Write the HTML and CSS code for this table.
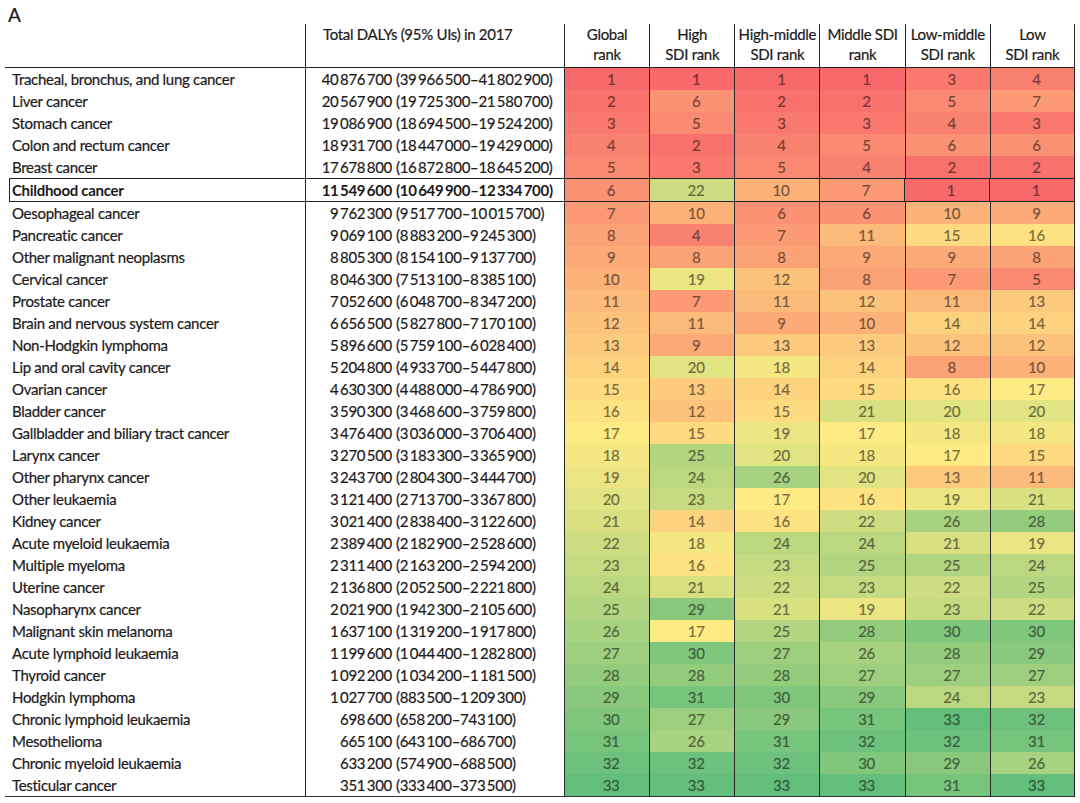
FILE: index.html
```html
<!DOCTYPE html>
<html lang="en">
<head>
<meta charset="utf-8">
<title>Cancer DALYs ranking</title>
<link rel="stylesheet" href="styles.css">
</head>
<body>
<div class="page">
  <div class="panel-label">A</div>
  <div class="table">
    <div class="row head">
      <div class="h-name"></div>
      <div class="h-daly">Total DALYs (95% UIs) in 2017</div>
      <div class="h-rank">Global<br>rank</div>
      <div class="h-rank">High<br>SDI rank</div>
      <div class="h-rank">High-middle<br>SDI rank</div>
      <div class="h-rank">Middle SDI<br>rank</div>
      <div class="h-rank">Low-middle<br>SDI rank</div>
      <div class="h-rank last">Low<br>SDI rank</div>
    </div>
    <div class="tbody">
      <div class="row"><div class="name">Tracheal, bronchus, and lung cancer</div><div class="daly"><span class="est">40&thinsp;876&thinsp;700</span><span class="ui">(39&thinsp;966&thinsp;500–41&thinsp;802&thinsp;900)</span></div><div class="rk r1">1</div><div class="rk r1">1</div><div class="rk r1">1</div><div class="rk r1">1</div><div class="rk r3">3</div><div class="rk last r4">4</div></div>
      <div class="row"><div class="name">Liver cancer</div><div class="daly"><span class="est">20&thinsp;567&thinsp;900</span><span class="ui">(19&thinsp;725&thinsp;300–21&thinsp;580&thinsp;700)</span></div><div class="rk r2">2</div><div class="rk r6">6</div><div class="rk r2">2</div><div class="rk r2">2</div><div class="rk r5">5</div><div class="rk last r7">7</div></div>
      <div class="row"><div class="name">Stomach cancer</div><div class="daly"><span class="est">19&thinsp;086&thinsp;900</span><span class="ui">(18&thinsp;694&thinsp;500–19&thinsp;524&thinsp;200)</span></div><div class="rk r3">3</div><div class="rk r5">5</div><div class="rk r3">3</div><div class="rk r3">3</div><div class="rk r4">4</div><div class="rk last r3">3</div></div>
      <div class="row"><div class="name">Colon and rectum cancer</div><div class="daly"><span class="est">18&thinsp;931&thinsp;700</span><span class="ui">(18&thinsp;447&thinsp;000–19&thinsp;429&thinsp;000)</span></div><div class="rk r4">4</div><div class="rk r2">2</div><div class="rk r4">4</div><div class="rk r5">5</div><div class="rk r6">6</div><div class="rk last r6">6</div></div>
      <div class="row"><div class="name">Breast cancer</div><div class="daly"><span class="est">17&thinsp;678&thinsp;800</span><span class="ui">(16&thinsp;872&thinsp;800–18&thinsp;645&thinsp;200)</span></div><div class="rk r5">5</div><div class="rk r3">3</div><div class="rk r5">5</div><div class="rk r4">4</div><div class="rk r2">2</div><div class="rk last r2">2</div></div>
      <div class="row highlight"><div class="name">Childhood cancer</div><div class="daly"><span class="est">11&thinsp;549&thinsp;600</span><span class="ui">(10&thinsp;649&thinsp;900–12&thinsp;334&thinsp;700)</span></div><div class="rk r6">6</div><div class="rk r22">22</div><div class="rk r10">10</div><div class="rk r7">7</div><div class="rk r1">1</div><div class="rk last r1">1</div></div>
      <div class="row"><div class="name">Oesophageal cancer</div><div class="daly"><span class="est">9&thinsp;762&thinsp;300</span><span class="ui">(9&thinsp;517&thinsp;700–10&thinsp;015&thinsp;700)</span></div><div class="rk r7">7</div><div class="rk r10">10</div><div class="rk r6">6</div><div class="rk r6">6</div><div class="rk r10">10</div><div class="rk last r9">9</div></div>
      <div class="row"><div class="name">Pancreatic cancer</div><div class="daly"><span class="est">9&thinsp;069&thinsp;100</span><span class="ui">(8&thinsp;883&thinsp;200–9&thinsp;245&thinsp;300)</span></div><div class="rk r8">8</div><div class="rk r4">4</div><div class="rk r7">7</div><div class="rk r11">11</div><div class="rk r15">15</div><div class="rk last r16">16</div></div>
      <div class="row"><div class="name">Other malignant neoplasms</div><div class="daly"><span class="est">8&thinsp;805&thinsp;300</span><span class="ui">(8&thinsp;154&thinsp;100–9&thinsp;137&thinsp;700)</span></div><div class="rk r9">9</div><div class="rk r8">8</div><div class="rk r8">8</div><div class="rk r9">9</div><div class="rk r9">9</div><div class="rk last r8">8</div></div>
      <div class="row"><div class="name">Cervical cancer</div><div class="daly"><span class="est">8&thinsp;046&thinsp;300</span><span class="ui">(7&thinsp;513&thinsp;100–8&thinsp;385&thinsp;100)</span></div><div class="rk r10">10</div><div class="rk r19">19</div><div class="rk r12">12</div><div class="rk r8">8</div><div class="rk r7">7</div><div class="rk last r5">5</div></div>
      <div class="row"><div class="name">Prostate cancer</div><div class="daly"><span class="est">7&thinsp;052&thinsp;600</span><span class="ui">(6&thinsp;048&thinsp;700–8&thinsp;347&thinsp;200)</span></div><div class="rk r11">11</div><div class="rk r7">7</div><div class="rk r11">11</div><div class="rk r12">12</div><div class="rk r11">11</div><div class="rk last r13">13</div></div>
      <div class="row"><div class="name">Brain and nervous system cancer</div><div class="daly"><span class="est">6&thinsp;656&thinsp;500</span><span class="ui">(5&thinsp;827&thinsp;800–7&thinsp;170&thinsp;100)</span></div><div class="rk r12">12</div><div class="rk r11">11</div><div class="rk r9">9</div><div class="rk r10">10</div><div class="rk r14">14</div><div class="rk last r14">14</div></div>
      <div class="row"><div class="name">Non-Hodgkin lymphoma</div><div class="daly"><span class="est">5&thinsp;896&thinsp;600</span><span class="ui">(5&thinsp;759&thinsp;100–6&thinsp;028&thinsp;400)</span></div><div class="rk r13">13</div><div class="rk r9">9</div><div class="rk r13">13</div><div class="rk r13">13</div><div class="rk r12">12</div><div class="rk last r12">12</div></div>
      <div class="row"><div class="name">Lip and oral cavity cancer</div><div class="daly"><span class="est">5&thinsp;204&thinsp;800</span><span class="ui">(4&thinsp;933&thinsp;700–5&thinsp;447&thinsp;800)</span></div><div class="rk r14">14</div><div class="rk r20">20</div><div class="rk r18">18</div><div class="rk r14">14</div><div class="rk r8">8</div><div class="rk last r10">10</div></div>
      <div class="row"><div class="name">Ovarian cancer</div><div class="daly"><span class="est">4&thinsp;630&thinsp;300</span><span class="ui">(4&thinsp;488&thinsp;000–4&thinsp;786&thinsp;900)</span></div><div class="rk r15">15</div><div class="rk r13">13</div><div class="rk r14">14</div><div class="rk r15">15</div><div class="rk r16">16</div><div class="rk last r17">17</div></div>
      <div class="row"><div class="name">Bladder cancer</div><div class="daly"><span class="est">3&thinsp;590&thinsp;300</span><span class="ui">(3&thinsp;468&thinsp;600–3&thinsp;759&thinsp;800)</span></div><div class="rk r16">16</div><div class="rk r12">12</div><div class="rk r15">15</div><div class="rk r21">21</div><div class="rk r20">20</div><div class="rk last r20">20</div></div>
      <div class="row"><div class="name">Gallbladder and biliary tract cancer</div><div class="daly"><span class="est">3&thinsp;476&thinsp;400</span><span class="ui">(3&thinsp;036&thinsp;000–3&thinsp;706&thinsp;400)</span></div><div class="rk r17">17</div><div class="rk r15">15</div><div class="rk r19">19</div><div class="rk r17">17</div><div class="rk r18">18</div><div class="rk last r18">18</div></div>
      <div class="row"><div class="name">Larynx cancer</div><div class="daly"><span class="est">3&thinsp;270&thinsp;500</span><span class="ui">(3&thinsp;183&thinsp;300–3&thinsp;365&thinsp;900)</span></div><div class="rk r18">18</div><div class="rk r25">25</div><div class="rk r20">20</div><div class="rk r18">18</div><div class="rk r17">17</div><div class="rk last r15">15</div></div>
      <div class="row"><div class="name">Other pharynx cancer</div><div class="daly"><span class="est">3&thinsp;243&thinsp;700</span><span class="ui">(2&thinsp;804&thinsp;300–3&thinsp;444&thinsp;700)</span></div><div class="rk r19">19</div><div class="rk r24">24</div><div class="rk r26">26</div><div class="rk r20">20</div><div class="rk r13">13</div><div class="rk last r11">11</div></div>
      <div class="row"><div class="name">Other leukaemia</div><div class="daly"><span class="est">3&thinsp;121&thinsp;400</span><span class="ui">(2&thinsp;713&thinsp;700–3&thinsp;367&thinsp;800)</span></div><div class="rk r20">20</div><div class="rk r23">23</div><div class="rk r17">17</div><div class="rk r16">16</div><div class="rk r19">19</div><div class="rk last r21">21</div></div>
      <div class="row"><div class="name">Kidney cancer</div><div class="daly"><span class="est">3&thinsp;021&thinsp;400</span><span class="ui">(2&thinsp;838&thinsp;400–3&thinsp;122&thinsp;600)</span></div><div class="rk r21">21</div><div class="rk r14">14</div><div class="rk r16">16</div><div class="rk r22">22</div><div class="rk r26">26</div><div class="rk last r28">28</div></div>
      <div class="row"><div class="name">Acute myeloid leukaemia</div><div class="daly"><span class="est">2&thinsp;389&thinsp;400</span><span class="ui">(2&thinsp;182&thinsp;900–2&thinsp;528&thinsp;600)</span></div><div class="rk r22">22</div><div class="rk r18">18</div><div class="rk r24">24</div><div class="rk r24">24</div><div class="rk r21">21</div><div class="rk last r19">19</div></div>
      <div class="row"><div class="name">Multiple myeloma</div><div class="daly"><span class="est">2&thinsp;311&thinsp;400</span><span class="ui">(2&thinsp;163&thinsp;200–2&thinsp;594&thinsp;200)</span></div><div class="rk r23">23</div><div class="rk r16">16</div><div class="rk r23">23</div><div class="rk r25">25</div><div class="rk r25">25</div><div class="rk last r24">24</div></div>
      <div class="row"><div class="name">Uterine cancer</div><div class="daly"><span class="est">2&thinsp;136&thinsp;800</span><span class="ui">(2&thinsp;052&thinsp;500–2&thinsp;221&thinsp;800)</span></div><div class="rk r24">24</div><div class="rk r21">21</div><div class="rk r22">22</div><div class="rk r23">23</div><div class="rk r22">22</div><div class="rk last r25">25</div></div>
      <div class="row"><div class="name">Nasopharynx cancer</div><div class="daly"><span class="est">2&thinsp;021&thinsp;900</span><span class="ui">(1&thinsp;942&thinsp;300–2&thinsp;105&thinsp;600)</span></div><div class="rk r25">25</div><div class="rk r29">29</div><div class="rk r21">21</div><div class="rk r19">19</div><div class="rk r23">23</div><div class="rk last r22">22</div></div>
      <div class="row"><div class="name">Malignant skin melanoma</div><div class="daly"><span class="est">1&thinsp;637&thinsp;100</span><span class="ui">(1&thinsp;319&thinsp;200–1&thinsp;917&thinsp;800)</span></div><div class="rk r26">26</div><div class="rk r17">17</div><div class="rk r25">25</div><div class="rk r28">28</div><div class="rk r30">30</div><div class="rk last r30">30</div></div>
      <div class="row"><div class="name">Acute lymphoid leukaemia</div><div class="daly"><span class="est">1&thinsp;199&thinsp;600</span><span class="ui">(1&thinsp;044&thinsp;400–1&thinsp;282&thinsp;800)</span></div><div class="rk r27">27</div><div class="rk r30">30</div><div class="rk r27">27</div><div class="rk r26">26</div><div class="rk r28">28</div><div class="rk last r29">29</div></div>
      <div class="row"><div class="name">Thyroid cancer</div><div class="daly"><span class="est">1&thinsp;092&thinsp;200</span><span class="ui">(1&thinsp;034&thinsp;200–1&thinsp;181&thinsp;500)</span></div><div class="rk r28">28</div><div class="rk r28">28</div><div class="rk r28">28</div><div class="rk r27">27</div><div class="rk r27">27</div><div class="rk last r27">27</div></div>
      <div class="row"><div class="name">Hodgkin lymphoma</div><div class="daly"><span class="est">1&thinsp;027&thinsp;700</span><span class="ui">(883&thinsp;500–1&thinsp;209&thinsp;300)</span></div><div class="rk r29">29</div><div class="rk r31">31</div><div class="rk r30">30</div><div class="rk r29">29</div><div class="rk r24">24</div><div class="rk last r23">23</div></div>
      <div class="row"><div class="name">Chronic lymphoid leukaemia</div><div class="daly"><span class="est">698&thinsp;600</span><span class="ui">(658&thinsp;200–743&thinsp;100)</span></div><div class="rk r30">30</div><div class="rk r27">27</div><div class="rk r29">29</div><div class="rk r31">31</div><div class="rk r33">33</div><div class="rk last r32">32</div></div>
      <div class="row"><div class="name">Mesothelioma</div><div class="daly"><span class="est">665&thinsp;100</span><span class="ui">(643&thinsp;100–686&thinsp;700)</span></div><div class="rk r31">31</div><div class="rk r26">26</div><div class="rk r31">31</div><div class="rk r32">32</div><div class="rk r32">32</div><div class="rk last r31">31</div></div>
      <div class="row"><div class="name">Chronic myeloid leukaemia</div><div class="daly"><span class="est">633&thinsp;200</span><span class="ui">(574&thinsp;900–688&thinsp;500)</span></div><div class="rk r32">32</div><div class="rk r32">32</div><div class="rk r32">32</div><div class="rk r30">30</div><div class="rk r29">29</div><div class="rk last r26">26</div></div>
      <div class="row"><div class="name">Testicular cancer</div><div class="daly"><span class="est">351&thinsp;300</span><span class="ui">(333&thinsp;400–373&thinsp;500)</span></div><div class="rk r33">33</div><div class="rk r33">33</div><div class="rk r33">33</div><div class="rk r33">33</div><div class="rk r31">31</div><div class="rk last r33">33</div></div>
    </div>
  </div>
</div>
</body>
</html>
```
FILE: styles.css
```css
* { box-sizing: border-box; }
html, body { margin: 0; padding: 0; background: #ffffff; }
body {
  font-family: Lato, "Open Sans", sans-serif;
  font-size: 15px;
  letter-spacing: -0.3px;
  color: #1c1a1b;
  -webkit-text-stroke: 0.2px currentColor;
}
.page { width: 1080px; height: 803px; padding: 0 5px; overflow: hidden; }
.panel-label { height: 24px; padding-left: 3px; font-size: 19px; line-height: 29px; letter-spacing: 0; }
.table { width: 1070px; }
.row {
  display: grid;
  grid-template-columns: 300px 259px repeat(6, 1fr);
  height: 22px;
  line-height: 22px;
  white-space: nowrap;
}
.head { height: 44px; line-height: 20px; border-bottom: 1px solid #222; }
.h-daly { border-left: 1px solid #222; padding-left: 17px; }
.h-rank { border-left: 1px solid #222; text-align: center; }
.h-rank.last, .rk.last { border-right: 1px solid #222; }
.tbody { border-bottom: 1px solid #333; }
.name { padding-left: 7px; }
.daly {
  border-left: 1px solid #222;
  display: grid;
  grid-template-columns: 86px 1fr;
  column-gap: 4px;
}
.est { text-align: right; }
.ui { text-align: left; }
.rk {
  border-left: 1px solid #2a2a2a;
  text-align: center;
  padding-left: 8px;
  background: var(--c);
  color: #5a3a3a;
  color: color-mix(in srgb, var(--c) 48%, #000);
}
.highlight {
  height: 24px;
  margin-left: 4px;
  border: 1px solid #222;
  grid-template-columns: 295px 259px repeat(6, 1fr);
  font-weight: 700;
  -webkit-text-stroke: 0;
}
.highlight .name { padding-left: 2px; }
.highlight .rk { font-weight: 400; -webkit-text-stroke: 0.2px currentColor; }
.highlight .rk.last { border-right: 0; }

.r1 { --c: rgb(248,105,107); }
.r2 { --c: rgb(248,113,109); }
.r3 { --c: rgb(249,121,110); }
.r4 { --c: rgb(249,129,112); }
.r5 { --c: rgb(250,138,113); }
.r6 { --c: rgb(250,146,115); }
.r7 { --c: rgb(251,154,116); }
.r8 { --c: rgb(251,162,118); }
.r9 { --c: rgb(252,170,120); }
.r10 { --c: rgb(252,178,121); }
.r11 { --c: rgb(252,186,123); }
.r12 { --c: rgb(253,194,124); }
.r13 { --c: rgb(253,203,126); }
.r14 { --c: rgb(254,211,127); }
.r15 { --c: rgb(254,219,129); }
.r16 { --c: rgb(255,227,130); }
.r17 { --c: rgb(255,235,132); }
.r18 { --c: rgb(245,232,131); }
.r19 { --c: rgb(236,229,131); }
.r20 { --c: rgb(226,227,130); }
.r21 { --c: rgb(216,224,130); }
.r22 { --c: rgb(206,221,129); }
.r23 { --c: rgb(197,218,129); }
.r24 { --c: rgb(187,215,128); }
.r25 { --c: rgb(177,213,128); }
.r26 { --c: rgb(167,210,127); }
.r27 { --c: rgb(158,207,126); }
.r28 { --c: rgb(148,204,126); }
.r29 { --c: rgb(138,201,125); }
.r30 { --c: rgb(128,198,125); }
.r31 { --c: rgb(119,196,124); }
.r32 { --c: rgb(109,193,124); }
.r33 { --c: rgb(99,190,123); }
```
